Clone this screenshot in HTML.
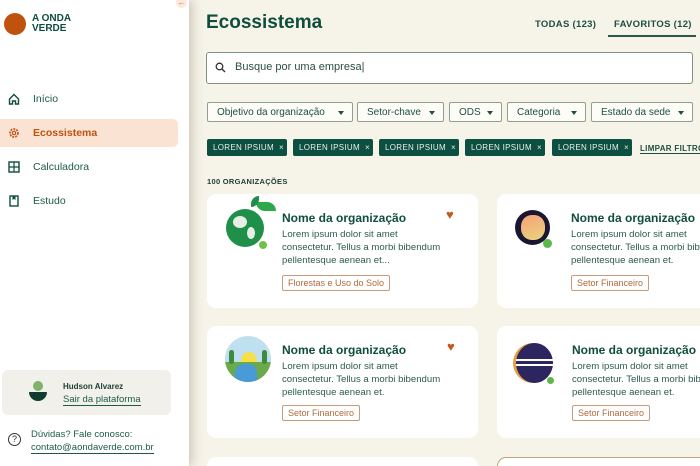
<!DOCTYPE html>
<html style="width:700px;height:466px;overflow:hidden"><head><meta charset="utf-8"><style>
*{box-sizing:border-box;margin:0;padding:0}
body{width:700px;height:466px;overflow:hidden;background:#f6f3e9;font-family:"Liberation Sans",sans-serif;position:relative;color:#0f4d3c}
.abs{position:absolute}
.side{left:0;top:0;width:189px;height:466px;background:#fff;box-shadow:3px 0 10px rgba(120,110,80,.35);z-index:2}
.nav{position:absolute;left:0;width:178px;height:28px;display:flex;align-items:center;font-size:10.5px;color:#1e5a4a}
.nav svg{margin-left:8px;margin-right:13px}
.tag{position:absolute;height:17px;background:#0d4f40;color:#e8efe9;font-size:8px;letter-spacing:.3px;display:flex;align-items:center;padding-left:6px;border-radius:2px;white-space:nowrap}
.dd{position:absolute;top:102px;height:20px;border:1px solid #8fa092;border-radius:2px;background:#fdfcf7;font-size:10px;color:#1e4f42;display:flex;align-items:center;padding-left:9px;white-space:nowrap}
.dd:after{content:"";position:absolute;right:8px;top:8px;border:3px solid transparent;border-top:4px solid #1e4f42}
.card{position:absolute;background:#fff;border-radius:9px;overflow:hidden}
.ct{position:absolute;font-weight:bold;font-size:12px;color:#0f4d3c;white-space:nowrap}
.cd{position:absolute;font-size:9.6px;line-height:13px;color:#2d5b4e;white-space:nowrap}
.chip{position:absolute;height:16px;border:1px solid #c89a7a;border-radius:2px;font-size:9px;color:#b06a3a;padding:0 5px;line-height:14px;white-space:nowrap}
.heart{position:absolute;color:#c25a1c;font-size:13px}
</style></head><body>
<div class="abs side">
  <div class="abs" style="left:4px;top:13px;width:22px;height:22px;border-radius:50%;background:#c0520f"></div>
  <div class="abs" style="left:32px;top:14px;font-size:10px;font-weight:bold;line-height:10px;color:#0f4d3c">A ONDA<br>VERDE</div>
  <div class="abs" style="left:176px;top:-3px;width:11px;height:11px;border-radius:50%;background:#fde9dd;color:#d0703a;font-size:8px;text-align:center;line-height:11px">←</div>
  <div class="nav" style="top:85px"><svg width="12" height="12" viewBox="0 0 12 12"><path d="M1.5 6L6 1.5 10.5 6V11H7.5V8H4.5V11H1.5Z" fill="none" stroke="#0f4d3c" stroke-width="1.4"/></svg>Início</div>
  <div class="nav" style="top:119px;background:#fbe3d3;border-radius:0 5px 5px 0;color:#c0520f;font-weight:bold"><svg width="12" height="12" viewBox="0 0 12 12"><circle cx="6" cy="6" r="4" fill="none" stroke="#c0520f" stroke-width="1.6" stroke-dasharray="2 1"/><circle cx="6" cy="6" r="1.7" fill="none" stroke="#c0520f" stroke-width="1.2"/></svg>Ecossistema</div>
  <div class="nav" style="top:153px"><svg width="12" height="12" viewBox="0 0 12 12"><rect x="1" y="1" width="10" height="10" fill="none" stroke="#0f4d3c" stroke-width="1.4"/><path d="M6 1V11M1 6H11" stroke="#0f4d3c" stroke-width="1.2"/></svg>Calculadora</div>
  <div class="nav" style="top:187px"><svg width="12" height="12" viewBox="0 0 12 12"><rect x="2" y="1" width="8" height="10" fill="none" stroke="#0f4d3c" stroke-width="1.4"/><path d="M4.5 1V5L6 4 7.5 5V1" fill="#0f4d3c"/></svg>Estudo</div>
  <div class="abs" style="left:2px;top:370px;width:169px;height:45px;background:#f1f0ea;border-radius:6px">
    <div class="abs" style="left:31px;top:11px;width:10px;height:10px;border-radius:50%;background:#7fb26b"></div>
    <div class="abs" style="left:27px;top:22px;width:18px;height:9px;border-radius:0 0 9px 9px;background:#0f3d30"></div>
    <div class="abs" style="left:61px;top:12px;font-size:8px;font-weight:bold;color:#1e3d34">Hudson Alvarez</div>
    <div class="abs" style="left:61px;top:24px;font-size:9.5px;color:#1e5a4a;border-bottom:1px solid #1e5a4a;line-height:11px">Sair da plataforma</div>
  </div>
  <div class="abs" style="left:8px;top:433px;width:13px;height:13px;border:1.3px solid #333;border-radius:50%;font-size:9px;text-align:center;line-height:11px;color:#333">?</div>
  <div class="abs" style="left:31px;top:428px;font-size:9.5px;line-height:13px;color:#1e5a4a">Dúvidas? Fale conosco:<br><span style="border-bottom:1px solid #1e5a4a">contato@aondaverde.com.br</span></div>
</div>

<div class="abs" style="left:206px;top:12px;font-size:19px;font-weight:bold;color:#0f4d3c">Ecossistema</div>
<div class="abs" style="left:535px;top:19px;font-size:9.5px;font-weight:bold;color:#1e4f42;letter-spacing:.3px">TODAS (123)</div>
<div class="abs" style="left:614px;top:19px;font-size:9.5px;font-weight:bold;color:#1e4f42;letter-spacing:.3px">FAVORITOS (12)</div>
<div class="abs" style="left:608px;top:35px;width:88px;height:2px;background:#2b5a4d"></div>

<div class="abs" style="left:206px;top:52px;width:487px;height:32px;background:#fff;border:1.5px solid #7d957f;border-radius:3px">
  <svg class="abs" style="left:8px;top:9px" width="11" height="11" viewBox="0 0 11 11"><circle cx="4.5" cy="4.5" r="3.3" fill="none" stroke="#333" stroke-width="1.3"/><path d="M7 7L10 10" stroke="#333" stroke-width="1.4"/></svg>
  <div class="abs" style="left:28px;top:8px;font-size:11px;color:#2d4d44">Busque por uma empresa|</div>
</div>

<div class="dd" style="left:207px;width:146px">Objetivo da organização</div>
<div class="dd" style="left:357px;width:87px">Setor-chave</div>
<div class="dd" style="left:449px;width:53px">ODS</div>
<div class="dd" style="left:507px;width:79px">Categoria</div>
<div class="dd" style="left:591px;width:102px">Estado da sede</div>

<div class="tag" style="left:207px;top:139px;width:80px">LOREN IPSIUM &nbsp;×</div>
<div class="tag" style="left:293px;top:139px;width:80px">LOREN IPSIUM &nbsp;×</div>
<div class="tag" style="left:379px;top:139px;width:80px">LOREN IPSIUM &nbsp;×</div>
<div class="tag" style="left:465px;top:139px;width:80px">LOREN IPSIUM &nbsp;×</div>
<div class="tag" style="left:552px;top:139px;width:80px">LOREN IPSIUM &nbsp;×</div>
<div class="abs" style="left:640px;top:144px;font-size:8px;font-weight:bold;color:#1e4f42;border-bottom:1px solid #1e4f42;letter-spacing:.3px;white-space:nowrap">LIMPAR FILTROS</div>

<div class="abs" style="left:207px;top:177px;font-size:7.5px;font-weight:bold;color:#1e3d34;letter-spacing:.3px">100 ORGANIZAÇÕES</div>

<div class="card" style="left:207px;top:194px;width:271px;height:114px">
  <div class="abs" style="left:19px;top:15px;width:38px;height:38px;border-radius:50%;background:#1f8f4a"></div>
  <div class="abs" style="left:26px;top:22px;width:14px;height:12px;border-radius:50%;background:#e6eee6"></div>
  <div class="abs" style="left:40px;top:33px;width:8px;height:12px;border-radius:50%;background:#e6eee6"></div>
  <div class="abs" style="left:49px;top:8px;width:20px;height:9px;border-radius:0 10px 0 10px;background:#2da84a"></div>
  <div class="abs" style="left:44px;top:2px;width:8px;height:11px;border-radius:8px 0 8px 0;background:#1f8f4a"></div>
  <div class="abs" style="left:52px;top:47px;width:8px;height:8px;border-radius:50%;background:#6fc04a"></div>
  <div class="ct" style="left:75px;top:17px">Nome da organização</div>
  <div class="heart" style="left:239px;top:13px">♥</div>
  <div class="cd" style="left:75px;top:34px">Lorem ipsum dolor sit amet<br>consectetur. Tellus a morbi bibendum<br>pellentesque aenean et...</div>
  <div class="chip" style="left:75px;top:81px">Florestas e Uso do Solo</div>
</div>
<div class="card" style="left:497px;top:194px;width:220px;height:114px">
  <div class="abs" style="left:18px;top:16px;width:35px;height:35px;border-radius:50%;background:#1a1530"></div>
  <div class="abs" style="left:24px;top:21px;width:24px;height:25px;border-radius:45%;background:linear-gradient(160deg,#f7a07a,#e9d47c)"></div>
  <div class="abs" style="left:46px;top:45px;width:9px;height:9px;border-radius:50%;background:#5cb84a"></div>
  <div class="ct" style="left:74px;top:17px">Nome da organização</div>
  <div class="cd" style="left:74px;top:34px">Lorem ipsum dolor sit amet<br>consectetur. Tellus a morbi bibendum<br>pellentesque aenean et.</div>
  <div class="chip" style="left:74px;top:81px">Setor Financeiro</div>
</div>
<div class="card" style="left:207px;top:326px;width:271px;height:112px">
  <div class="abs" style="left:18px;top:10px;width:46px;height:46px;border-radius:50%;overflow:hidden;background:#bfe0f0">
    <div class="abs" style="left:16px;top:16px;width:16px;height:16px;border-radius:50%;background:#f5e04a"></div>
    <div class="abs" style="left:0;top:26px;width:46px;height:20px;background:#6aaa4a"></div>
    <div class="abs" style="left:10px;top:28px;width:22px;height:20px;background:#4a9ad8;border-radius:40% 40% 0 0"></div>
    <div class="abs" style="left:4px;top:14px;width:5px;height:14px;background:#3d8a3a;border-radius:3px"></div>
    <div class="abs" style="left:37px;top:14px;width:5px;height:14px;background:#3d8a3a;border-radius:3px"></div>
  </div>
  <div class="ct" style="left:75px;top:17px">Nome da organização</div>
  <div class="heart" style="left:240px;top:13px">♥</div>
  <div class="cd" style="left:75px;top:34px">Lorem ipsum dolor sit amet<br>consectetur. Tellus a morbi bibendum<br>pellentesque aenean et.</div>
  <div class="chip" style="left:75px;top:79px">Setor Financeiro</div>
</div>
<div class="card" style="left:497px;top:326px;width:220px;height:112px">
  <div class="abs" style="left:16px;top:17px;width:40px;height:40px;border-radius:50%;background:#e3a040"></div>
  <div class="abs" style="left:19px;top:17px;width:37px;height:40px;border-radius:50%;background:#2d2560"></div>
  <div class="abs" style="left:19px;top:33px;width:37px;height:2px;background:#fff"></div>
  <div class="abs" style="left:19px;top:38px;width:37px;height:2px;background:#fff"></div>
  <div class="abs" style="left:50px;top:51px;width:7px;height:7px;border-radius:50%;background:#5cb84a"></div>
  <div class="ct" style="left:75px;top:17px">Nome da organização</div>
  <div class="cd" style="left:75px;top:34px">Lorem ipsum dolor sit amet<br>consectetur. Tellus a morbi bibendum<br>pellentesque aenean et.</div>
  <div class="chip" style="left:75px;top:79px">Setor Financeiro</div>
</div>
<div class="card" style="left:207px;top:457px;width:271px;height:9px;border-radius:9px 9px 0 0"></div>
<div class="card" style="left:497px;top:457px;width:210px;height:9px;border:1px solid #c8a07a;border-bottom:none;border-radius:9px 0 0 0"></div>
</body></html>
